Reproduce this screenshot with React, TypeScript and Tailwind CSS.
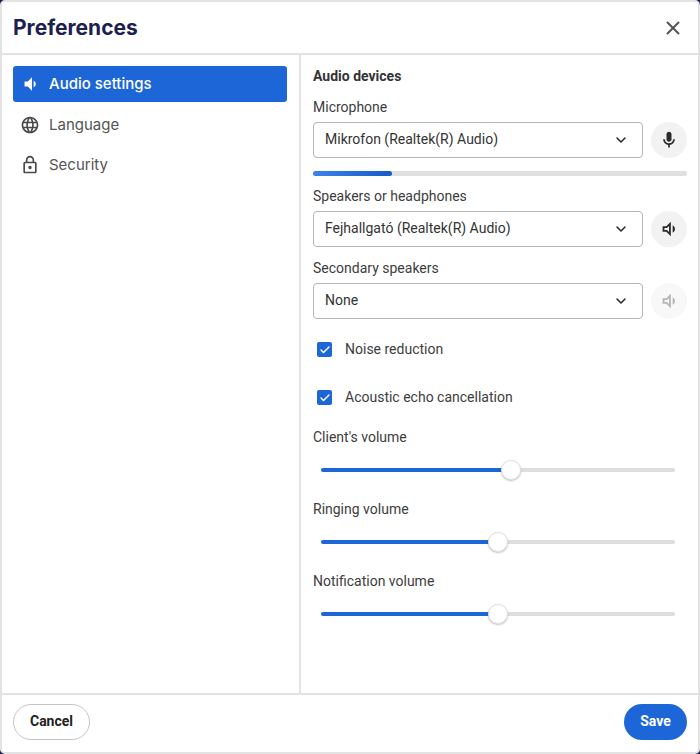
import React from "react";
import { ChevronDown, Check, X } from "lucide-react";

const roboto = "font-['Roboto',sans-serif]";
const mont = "font-['Inter',sans-serif]";

function SpeakerFilled({ className = "" }: { className?: string }) {
  return (
    <svg viewBox="0 0 24 24" className={className} fill="currentColor">
      <path d="M3 9v6h4l5 5V4L7 9H3zm13.5 3c0-1.77-1-3.29-2.5-4.03v8.05c1.5-.73 2.5-2.25 2.5-4.02z" />
    </svg>
  );
}

function SpeakerOutline({ className = "" }: { className?: string }) {
  return (
    <svg viewBox="0 0 24 24" className={className} fill="currentColor">
      <path d="M16 7.97v8.05c1.48-.73 2.5-2.25 2.5-4.02 0-1.77-1.02-3.3-2.5-4.03zM5 9v6h4l5 5V4L9 9H5zm7-.17v6.34L9.83 13H7v-2h2.83L12 8.83z" />
    </svg>
  );
}

function Mic({ className = "" }: { className?: string }) {
  return (
    <svg viewBox="0 0 24 24" className={className} fill="currentColor">
      <path d="M12 14c1.66 0 3-1.34 3-3V5c0-1.66-1.34-3-3-3S9 3.34 9 5v6c0 1.66 1.34 3 3 3z" />
      <path d="M17 11c0 2.76-2.24 5-5 5s-5-2.24-5-5H5c0 3.53 2.61 6.43 6 6.92V21h2v-3.08c3.39-.49 6-3.39 6-6.92h-2z" />
    </svg>
  );
}

function Lock({ className = "" }: { className?: string }) {
  return (
    <svg viewBox="0 0 24 24" className={className} fill="currentColor">
      <path d="M18 8h-1V6c0-2.76-2.24-5-5-5S7 3.24 7 6v2H6c-1.1 0-2 .9-2 2v10c0 1.1.9 2 2 2h12c1.1 0 2-.9 2-2V10c0-1.1-.9-2-2-2zM9 6c0-1.66 1.34-3 3-3s3 1.34 3 3v2H9V6zm9 14H6V10h12v10zm-6-3c1.1 0 2-.9 2-2s-.9-2-2-2-2 .9-2 2 .9 2 2 2z" />
    </svg>
  );
}

function LanguageIcon({ className = "" }: { className?: string }) {
  return (
    <svg viewBox="0 0 24 24" className={className} fill="currentColor">
      <path d="M11.99 2C6.47 2 2 6.48 2 12s4.47 10 9.99 10C17.52 22 22 17.52 22 12S17.52 2 11.99 2zm6.93 6h-2.95c-.32-1.25-.78-2.45-1.38-3.56 1.84.63 3.37 1.91 4.33 3.56zM12 4.04c.83 1.2 1.48 2.53 1.91 3.96h-3.82c.43-1.43 1.08-2.76 1.91-3.96zM4.26 14C4.1 13.36 4 12.69 4 12s.1-1.36.26-2h3.38c-.08.66-.14 1.32-.14 2 0 .68.06 1.34.14 2H4.26zm.82 2h2.95c.32 1.25.78 2.45 1.38 3.56-1.84-.63-3.37-1.9-4.33-3.56zm2.95-8H5.08c.96-1.66 2.49-2.93 4.33-3.56C8.81 5.55 8.35 6.75 8.03 8zM12 19.96c-.83-1.2-1.48-2.53-1.91-3.96h3.82c-.43 1.43-1.08 2.76-1.91 3.96zM14.34 14H9.66c-.09-.66-.16-1.32-.16-2 0-.68.07-1.35.16-2h4.68c.09.65.16 1.32.16 2 0 .68-.07 1.34-.16 2zm.25 5.56c.6-1.11 1.06-2.31 1.38-3.56h2.95c-.96 1.65-2.49 2.93-4.33 3.56zM16.36 14c.08-.66.14-1.32.14-2 0-.68-.06-1.34-.14-2h3.38c.16.64.26 1.31.26 2s-.1 1.36-.26 2h-3.38z" />
    </svg>
  );
}

function SelectRow({
  label,
  value,
  icon,
  labelClass,
}: {
  label: string;
  value: string;
  icon: React.ReactNode;
  labelClass?: string;
}) {
  return (
    <div className={labelClass}>
      <div className="text-[14px] leading-[18px] text-[#3d3d3d]">{label}</div>
      <div className="mt-[6px] flex items-center gap-[8px]">
        <div className="flex h-[36px] flex-1 items-center justify-between rounded-[4px] border border-[#b5b5b5] pl-[11px] pr-[13px] text-[14px] text-[#333333]">
          <span className="-mt-[1px]">{value}</span>
          <ChevronDown className="h-[16px] w-[16px] text-[#222222]" strokeWidth={2.2} />
        </div>
        {icon}
      </div>
    </div>
  );
}

function CheckRow({ label, className }: { label: string; className?: string }) {
  return (
    <div className={`flex items-center pl-[4px] ${className ?? ""}`}>
      <span className="flex h-[15px] w-[15px] items-center justify-center rounded-[2px] bg-[#1d66d8]">
        <Check className="h-[12px] w-[12px] text-white" strokeWidth={3} />
      </span>
      <span className="ml-[13px] text-[14px] text-[#3d3d3d]">{label}</span>
    </div>
  );
}

function VolumeSlider({ label, fill, className }: { label: string; fill: string; className?: string }) {
  return (
    <div className={className}>
      <div className="text-[14px] leading-[18px] text-[#3d3d3d]">{label}</div>
      <div className="ml-[8px] mr-[12px] mt-[14px] flex h-[20px] items-center">
        <div className="relative h-[4px] w-full rounded-full bg-[#dedede]">
          <div className={`relative h-full rounded-full bg-[#1d66d8] ${fill}`}>
            <span className="absolute right-[-10px] top-[-8px] h-[20px] w-[20px] rounded-full border border-[#e2e2e2] bg-white shadow-[0_1px_2px_rgba(0,0,0,0.25)]" />
          </div>
        </div>
      </div>
    </div>
  );
}

export default function App() {
  return (
    <div className={`h-[754px] w-[700px] bg-[#1a1c4e] ${roboto}`}>
      <div className="flex h-full w-full flex-col overflow-hidden rounded-[5px] border-2 border-[#e3e3e3] bg-white">
        <header className="flex h-[53px] shrink-0 items-center justify-between border-b-2 border-[#e3e3e3] pl-[11px] pr-[14px]">
          <h1 className={`text-[21px] font-bold leading-none text-[#1c1f4f] ${mont}`}>Preferences</h1>
          <X className="h-[22px] w-[22px] text-[#555555]" strokeWidth={2.2} />
        </header>
        <div className="flex min-h-0 flex-1">
          <nav className="flex w-[299px] shrink-0 flex-col border-r-2 border-[#e3e3e3] pl-[11px] pr-[12px] pt-[11px]">
            <div className={`flex h-[36px] items-center rounded-[3px] bg-[#1d66d8] pl-[9px] text-[15px] font-medium text-white ${mont}`}>
              <SpeakerFilled className="h-[20px] w-[20px]" />
              <span className="ml-[7px]">Audio settings</span>
            </div>
            <div className={`mt-[3px] flex h-[40px] items-center pl-[7px] text-[15px] text-[#555555] ${mont}`}>
              <LanguageIcon className="h-[20px] w-[20px] text-[#4a4a4a]" />
              <span className="ml-[9px]">Language</span>
            </div>
            <div className={`flex h-[40px] items-center pl-[7px] text-[15px] text-[#555555] ${mont}`}>
              <Lock className="h-[20px] w-[20px] text-[#4a4a4a]" />
              <span className="ml-[9px]">Security</span>
            </div>
          </nav>
          <main className="min-w-0 flex-1 pl-[12px] pr-[11px] pt-[12px]">
            <div className="text-[14px] font-bold leading-[18px] text-[#333333]">Audio devices</div>
            <SelectRow
              labelClass="mt-[13px]"
              label="Microphone"
              value="Mikrofon (Realtek(R) Audio)"
              icon={
                <span className="flex h-[36px] w-[36px] items-center justify-center rounded-full bg-[#f2f2f2]">
                  <Mic className="h-[20px] w-[20px] text-[#2b2b2b]" />
                </span>
              }
            />
            <div className="mt-[13px] h-[5px] w-full rounded-full bg-[#e0e0e0]">
              <div className="h-full w-[21%] rounded-full bg-linear-to-r from-[#3b82ea] to-[#155bc9]" />
            </div>
            <SelectRow
              labelClass="mt-[11px]"
              label="Speakers or headphones"
              value="Fejhallgató (Realtek(R) Audio)"
              icon={
                <span className="flex h-[36px] w-[36px] items-center justify-center rounded-full bg-[#f2f2f2]">
                  <SpeakerOutline className="h-[22px] w-[22px] text-[#2b2b2b]" />
                </span>
              }
            />
            <SelectRow
              labelClass="mt-[12px]"
              label="Secondary speakers"
              value="None"
              icon={
                <span className="flex h-[36px] w-[36px] items-center justify-center rounded-full bg-[#f8f8f8]">
                  <SpeakerOutline className="h-[22px] w-[22px] text-[#b5b5b5]" />
                </span>
              }
            />
            <CheckRow label="Noise reduction" className="mt-[20px]" />
            <CheckRow label="Acoustic echo cancellation" className="mt-[27px]" />
            <VolumeSlider label="Client's volume" fill="w-[53.7%]" className="mt-[20px]" />
            <VolumeSlider label="Ringing volume" fill="w-[50%]" className="mt-[20px]" />
            <VolumeSlider label="Notification volume" fill="w-[50%]" className="mt-[20px]" />
          </main>
        </div>
        <footer className="flex h-[59px] shrink-0 items-center justify-between border-t-2 border-[#e3e3e3] pb-[4px] pl-[11px] pr-[11px]">
          <button className="h-[36px] w-[77px] rounded-full border border-[#c4c4c4] bg-white text-[14px] font-bold text-[#222222]">Cancel</button>
          <button className="h-[36px] w-[63px] rounded-full bg-[#1d66d8] text-[14px] font-bold text-white">Save</button>
        </footer>
      </div>
    </div>
  );
}
